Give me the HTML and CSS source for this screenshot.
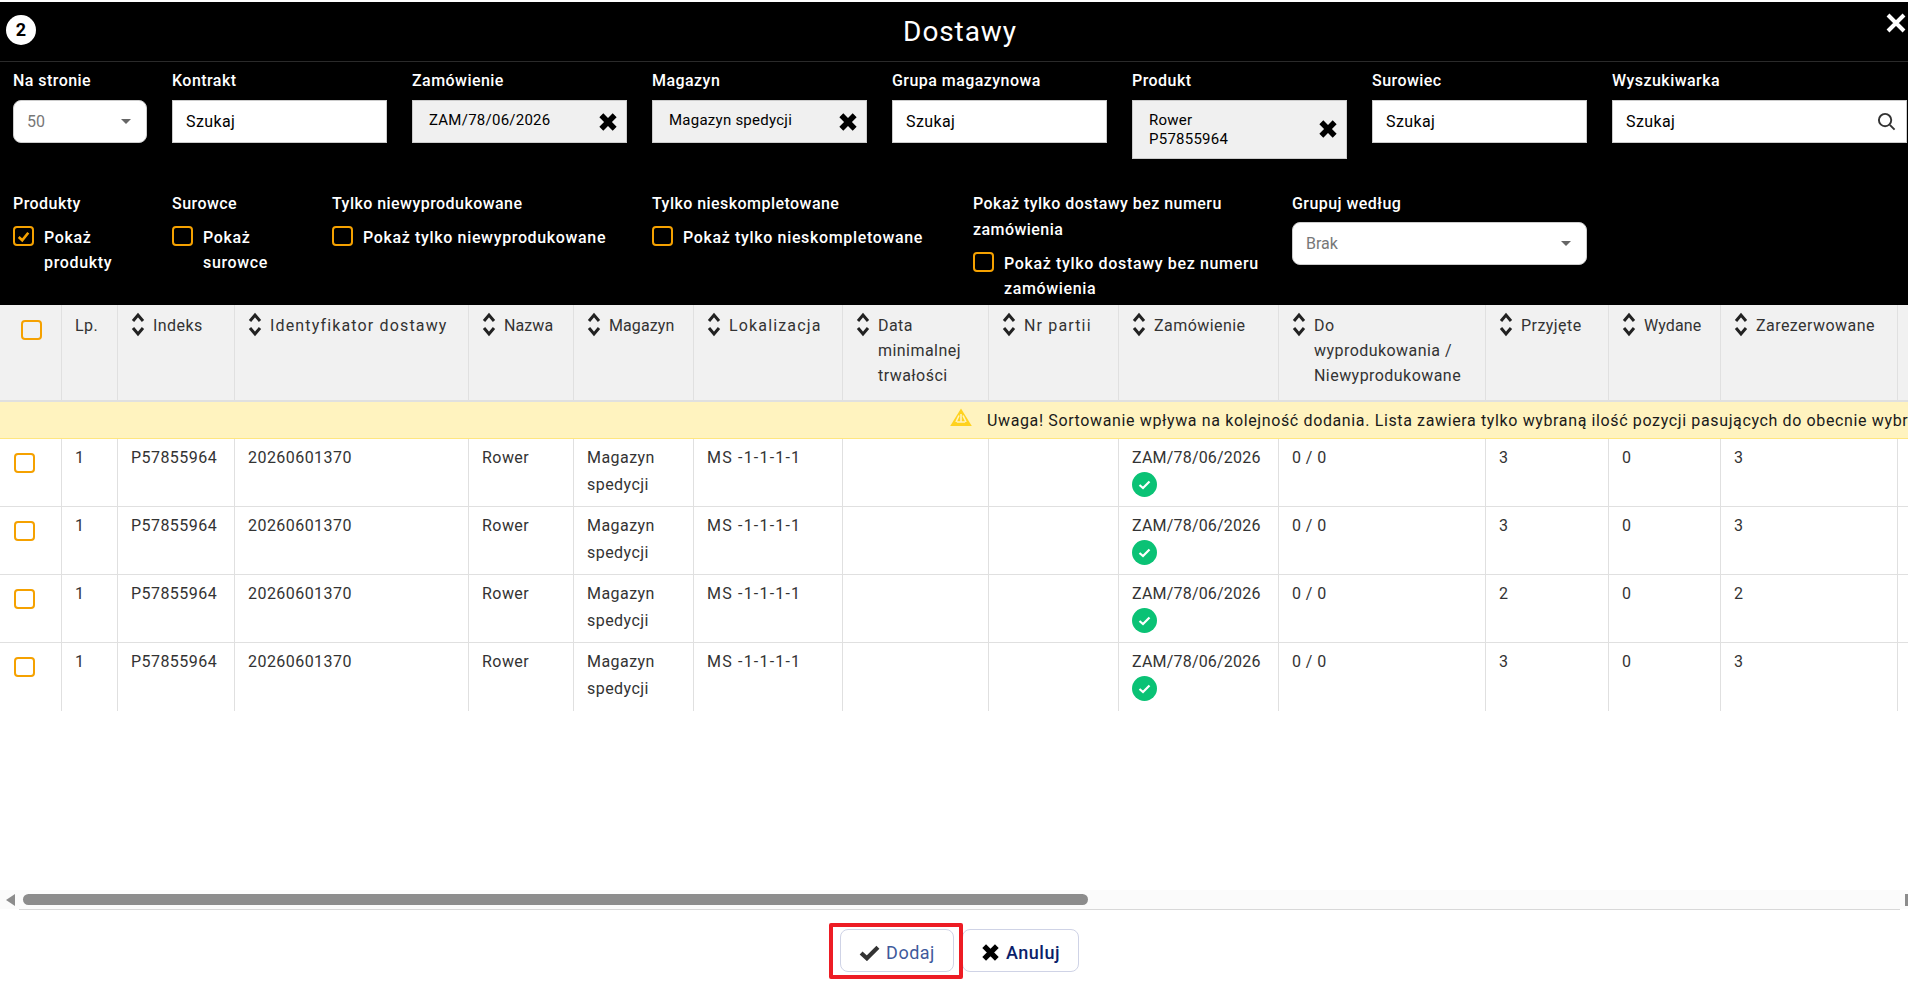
FILE: index.html
```html
<!DOCTYPE html>
<html lang="pl">
<head>
    <meta charset="UTF-8">
    <meta name="viewport" content="width=device-width, initial-scale=1.0">
    <title>Dostawy</title>
    <link rel="stylesheet" href="styles.css">
</head>
<body>
    <div class="modal">
        <header class="modal-header">
            <span class="step-badge">2</span>
            <h1>Dostawy</h1>
            <svg class="close-icon" viewBox="0 0 20 20"><path d="M2 2 L18 18 M18 2 L2 18"/></svg>
        </header>

        <section class="filters">
            <div class="filter-row top-row">
                <div class="field">
                    <label>Na stronie</label>
                    <div class="select-box"><span>50</span><i class="caret"></i></div>
                </div>
                <div class="field">
                    <label>Kontrakt</label>
                    <div class="search-box"><span>Szukaj</span></div>
                </div>
                <div class="field">
                    <label>Zamówienie</label>
                    <div class="chosen-box"><span>ZAM/78/06/2026</span><svg class="clear-icon" viewBox="0 0 18 18"><path d="M3 3 L15 15 M15 3 L3 15"/></svg></div>
                </div>
                <div class="field">
                    <label>Magazyn</label>
                    <div class="chosen-box"><span>Magazyn spedycji</span><svg class="clear-icon" viewBox="0 0 18 18"><path d="M3 3 L15 15 M15 3 L3 15"/></svg></div>
                </div>
                <div class="field">
                    <label>Grupa magazynowa</label>
                    <div class="search-box"><span>Szukaj</span></div>
                </div>
                <div class="field">
                    <label>Produkt</label>
                    <div class="chosen-box tall"><span>Rower<br>P57855964</span><svg class="clear-icon" viewBox="0 0 18 18"><path d="M3 3 L15 15 M15 3 L3 15"/></svg></div>
                </div>
                <div class="field">
                    <label>Surowiec</label>
                    <div class="search-box"><span>Szukaj</span></div>
                </div>
                <div class="field">
                    <label>Wyszukiwarka</label>
                    <div class="search-box"><span>Szukaj</span><svg class="search-icon" viewBox="0 0 20 20"><circle cx="8.5" cy="8.5" r="6.5"/><path d="M13.5 13.5 L18.5 18.5"/></svg></div>
                </div>
            </div>

            <div class="filter-row bottom-row">
                <div class="field">
                    <label>Produkty</label>
                    <div class="check-line">
                        <span class="check"><svg viewBox="0 0 16 16"><path d="M3.5 8.5 L6.8 11.5 L12.5 4.5"/></svg></span>
                        <span>Pokaż produkty</span>
                    </div>
                </div>
                <div class="field">
                    <label>Surowce</label>
                    <div class="check-line"><span class="check"></span><span>Pokaż surowce</span></div>
                </div>
                <div class="field">
                    <label>Tylko niewyprodukowane</label>
                    <div class="check-line"><span class="check"></span><span>Pokaż tylko niewyprodukowane</span></div>
                </div>
                <div class="field">
                    <label>Tylko nieskompletowane</label>
                    <div class="check-line"><span class="check"></span><span>Pokaż tylko nieskompletowane</span></div>
                </div>
                <div class="field">
                    <label>Pokaż tylko dostawy bez numeru zamówienia</label>
                    <div class="check-line"><span class="check"></span><span>Pokaż tylko dostawy bez numeru zamówienia</span></div>
                </div>
                <div class="field">
                    <label>Grupuj według</label>
                    <div class="select-box group-select"><span>Brak</span><i class="caret"></i></div>
                </div>
            </div>
        </section>

        <div class="table-wrap">
            <table class="deliveries">
                <colgroup>
                    <col class="c-check"><col class="c-lp"><col class="c-index"><col class="c-ident">
                    <col class="c-name"><col class="c-store"><col class="c-loc"><col class="c-date">
                    <col class="c-batch"><col class="c-order"><col class="c-todo"><col class="c-in">
                    <col class="c-out"><col class="c-res"><col class="c-rest">
                </colgroup>
                <thead>
                    <tr>
                        <th class="head-check"><span class="check"></span></th>
                        <th>Lp.</th>
                        <th><div class="sort"><svg viewBox="0 0 14 26"><path d="M2 10 L7 4 L12 10 M2 17 L7 23 L12 17"/></svg><span>Indeks</span></div></th>
                        <th><div class="sort wide"><svg viewBox="0 0 14 26"><path d="M2 10 L7 4 L12 10 M2 17 L7 23 L12 17"/></svg><span>Identyfikator dostawy</span></div></th>
                        <th><div class="sort narrow"><svg viewBox="0 0 14 26"><path d="M2 10 L7 4 L12 10 M2 17 L7 23 L12 17"/></svg><span>Nazwa</span></div></th>
                        <th><div class="sort narrow"><svg viewBox="0 0 14 26"><path d="M2 10 L7 4 L12 10 M2 17 L7 23 L12 17"/></svg><span>Magazyn</span></div></th>
                        <th><div class="sort wide"><svg viewBox="0 0 14 26"><path d="M2 10 L7 4 L12 10 M2 17 L7 23 L12 17"/></svg><span>Lokalizacja</span></div></th>
                        <th><div class="sort"><svg viewBox="0 0 14 26"><path d="M2 10 L7 4 L12 10 M2 17 L7 23 L12 17"/></svg><span>Data<br>minimalnej<br>trwałości</span></div></th>
                        <th><div class="sort wide"><svg viewBox="0 0 14 26"><path d="M2 10 L7 4 L12 10 M2 17 L7 23 L12 17"/></svg><span>Nr partii</span></div></th>
                        <th><div class="sort"><svg viewBox="0 0 14 26"><path d="M2 10 L7 4 L12 10 M2 17 L7 23 L12 17"/></svg><span>Zamówienie</span></div></th>
                        <th><div class="sort"><svg viewBox="0 0 14 26"><path d="M2 10 L7 4 L12 10 M2 17 L7 23 L12 17"/></svg><span>Do<br>wyprodukowania /<br>Niewyprodukowane</span></div></th>
                        <th><div class="sort"><svg viewBox="0 0 14 26"><path d="M2 10 L7 4 L12 10 M2 17 L7 23 L12 17"/></svg><span>Przyjęte</span></div></th>
                        <th><div class="sort narrow"><svg viewBox="0 0 14 26"><path d="M2 10 L7 4 L12 10 M2 17 L7 23 L12 17"/></svg><span>Wydane</span></div></th>
                        <th><div class="sort"><svg viewBox="0 0 14 26"><path d="M2 10 L7 4 L12 10 M2 17 L7 23 L12 17"/></svg><span>Zarezerwowane</span></div></th>
                        <th></th>
                    </tr>
                </thead>
                <tbody>
                    <tr class="notice-row">
                        <td colspan="15">
                            <div class="notice">
                                <svg viewBox="0 0 22 18"><path class="tri" d="M11 0.5 L21.8 18 L0.2 18 Z"/><path class="tri-mark" d="M11 6 V13.5 M7 14 L15 14 M9 7.5 L6 14 M13 7.5 L16 14"/></svg>
                                <span>Uwaga! Sortowanie wpływa na kolejność dodania. Lista zawiera tylko wybraną ilość pozycji pasujących do obecnie wybranych</span>
                            </div>
                        </td>
                    </tr>
                    <tr>
                        <td class="row-check"><span class="check"></span></td>
                        <td>1</td><td>P57855964</td><td>20260601370</td><td>Rower</td><td>Magazyn<br>spedycji</td><td class="loc">MS -1-1-1-1</td><td></td><td></td>
                        <td class="order">ZAM/78/06/2026<svg class="ok-icon" viewBox="0 0 25 25"><circle cx="12.5" cy="12.5" r="12.5"/><path d="M7.5 13 L11 16 L17.5 9.5"/></svg></td>
                        <td>0 / 0</td><td>3</td><td>0</td><td>3</td><td></td>
                    </tr>
                    <tr>
                        <td class="row-check"><span class="check"></span></td>
                        <td>1</td><td>P57855964</td><td>20260601370</td><td>Rower</td><td>Magazyn<br>spedycji</td><td class="loc">MS -1-1-1-1</td><td></td><td></td>
                        <td class="order">ZAM/78/06/2026<svg class="ok-icon" viewBox="0 0 25 25"><circle cx="12.5" cy="12.5" r="12.5"/><path d="M7.5 13 L11 16 L17.5 9.5"/></svg></td>
                        <td>0 / 0</td><td>3</td><td>0</td><td>3</td><td></td>
                    </tr>
                    <tr>
                        <td class="row-check"><span class="check"></span></td>
                        <td>1</td><td>P57855964</td><td>20260601370</td><td>Rower</td><td>Magazyn<br>spedycji</td><td class="loc">MS -1-1-1-1</td><td></td><td></td>
                        <td class="order">ZAM/78/06/2026<svg class="ok-icon" viewBox="0 0 25 25"><circle cx="12.5" cy="12.5" r="12.5"/><path d="M7.5 13 L11 16 L17.5 9.5"/></svg></td>
                        <td>0 / 0</td><td>2</td><td>0</td><td>2</td><td></td>
                    </tr>
                    <tr class="last-row">
                        <td class="row-check"><span class="check"></span></td>
                        <td>1</td><td>P57855964</td><td>20260601370</td><td>Rower</td><td>Magazyn<br>spedycji</td><td class="loc">MS -1-1-1-1</td><td></td><td></td>
                        <td class="order">ZAM/78/06/2026<svg class="ok-icon" viewBox="0 0 25 25"><circle cx="12.5" cy="12.5" r="12.5"/><path d="M7.5 13 L11 16 L17.5 9.5"/></svg></td>
                        <td>0 / 0</td><td>3</td><td>0</td><td>3</td><td></td>
                    </tr>
                </tbody>
            </table>
        </div>

        <div class="scrollbar">
            <i class="arrow-left"></i>
            <div class="thumb"></div>
            <i class="arrow-right"></i>
        </div>
        <div class="scroll-line"></div>

        <footer class="modal-footer">
            <div class="marked">
                <button class="btn btn-add">
                    <svg viewBox="0 0 20 16"><path d="M2 8.5 L7.5 13.5 L18 3"/></svg>Dodaj
                </button>
                <span class="red-box"></span>
            </div>
            <button class="btn btn-cancel">
                <svg viewBox="0 0 18 18"><path d="M3 3 L15 15 M15 3 L3 15"/></svg>Anuluj
            </button>
        </footer>
    </div>
</body>
</html>
```

FILE: styles.css
```css
* {
    box-sizing: border-box;
}
body, html {
    margin: 0;
    padding: 0;
    height: 100%;
    overflow: hidden;
    background-color: #ffffff;
    font-family: Roboto, "Liberation Sans", sans-serif;
    font-size: 16px;
}
.modal {
    display: flex;
    flex-direction: column;
    height: 100%;
    padding-top: 2px;
}
.modal-header {
    display: flex;
    align-items: center;
    justify-content: center;
    position: relative;
    height: 60px;
    flex-shrink: 0;
    padding-left: 12px;
    background-color: #000000;
    border-bottom: 1px solid #2a2a2a;
    color: #ffffff;
}
.modal-header h1 {
    margin: 0;
    font-size: 28px;
    font-weight: 400;
    letter-spacing: 0.9px;
}
.step-badge {
    position: absolute;
    left: 6px;
    top: 13px;
    width: 30px;
    height: 30px;
    border-radius: 50%;
    background-color: #ffffff;
    color: #000000;
    font-weight: 700;
    font-size: 18px;
    line-height: 30px;
    text-align: center;
}
.close-icon {
    position: absolute;
    right: 2px;
    top: 11px;
    width: 20px;
    height: 20px;
    fill: none;
    stroke: #ffffff;
    stroke-width: 4;
}
.filters {
    flex-shrink: 0;
    height: 243px;
    background-color: #000000;
    color: #ffffff;
    padding-left: 13px;
}
.filter-row {
    display: grid;
    column-gap: 25px;
}
.top-row {
    grid-template-columns: 134px repeat(6, 215px) 295px;
    height: 98px;
    padding-top: 6px;
}
.bottom-row {
    grid-template-columns: 134px 135px 295px 296px 294px 295px;
    margin-top: 31px;
}
.field label {
    display: block;
    font-weight: 500;
    line-height: 26px;
    letter-spacing: 0.45px;
}
.top-row label {
    margin-bottom: 6px;
}
.select-box, .search-box, .chosen-box {
    display: flex;
    align-items: center;
    justify-content: space-between;
    height: 43px;
    border: 1px solid #cccccc;
    color: #000000;
}
.select-box {
    background-color: #ffffff;
    border-radius: 8px;
    padding: 0 15px 0 13px;
    color: #777777;
}
.group-select {
    margin-top: 5px;
}
.search-box {
    background-color: #ffffff;
    padding: 0 10px 0 13px;
    letter-spacing: 0.4px;
}
.chosen-box {
    background-color: #f0f0f0;
    padding: 0 8px 3px 16px;
    font-size: 15px;
    line-height: 19px;
    letter-spacing: 0.25px;
}
.chosen-box.tall {
    height: 59px;
    padding-bottom: 2px;
    align-items: flex-start;
    padding-top: 10px;
}
.chosen-box.tall .clear-icon {
    margin-top: 8px;
}
.caret {
    width: 0;
    height: 0;
    border-left: 5px solid transparent;
    border-right: 5px solid transparent;
    border-top: 5px solid #666666;
}
.clear-icon {
    width: 20px;
    height: 20px;
    margin-bottom: -4px;
    fill: none;
    stroke: #000000;
    stroke-width: 5;
}
.search-icon {
    width: 19px;
    height: 19px;
    fill: none;
    stroke: #333333;
    stroke-width: 2;
}
.check-line {
    display: flex;
    gap: 10px;
    line-height: 25px;
    font-weight: 500;
    letter-spacing: 0.65px;
    margin-top: 8px;
}
.check {
    display: block;
    flex-shrink: 0;
    width: 21px;
    height: 20px;
    margin-top: 1px;
    border: 2px solid #f5a100;
    border-radius: 4px;
}
.check svg {
    display: block;
    fill: none;
    stroke: #f5a100;
    stroke-width: 2.5;
}
.table-wrap {
    flex-grow: 1;
    min-height: 0;
    overflow: hidden;
}
.deliveries {
    width: 2000px;
    table-layout: fixed;
    border-collapse: separate;
    border-spacing: 0;
    color: #333333;
}
.c-check { width: 62px; }
.c-lp { width: 56px; }
.c-index { width: 117px; }
.c-ident { width: 234px; }
.c-name { width: 105px; }
.c-store { width: 120px; }
.c-loc { width: 149px; }
.c-date { width: 146px; }
.c-batch { width: 130px; }
.c-order { width: 160px; }
.c-todo { width: 207px; }
.c-in { width: 123px; }
.c-out { width: 112px; }
.c-res { width: 177px; }
.c-rest { width: 102px; }
th, td {
    padding: 5px 13px 0;
    border-right: 1px solid #e0e0e0;
    border-bottom: 1px solid #e0e0e0;
    text-align: left;
    vertical-align: top;
    font-weight: 400;
    line-height: 27px;
    letter-spacing: 0.45px;
    white-space: nowrap;
}
th {
    height: 97px;
    padding-top: 8px;
    line-height: 25px;
    background-color: #f1f1f1;
    border-bottom-width: 2px;
}
td {
    height: 68px;
}
td.loc {
    letter-spacing: 1.2px;
}
td.order {
    letter-spacing: 0.2px;
}
.sort {
    display: flex;
    gap: 8px;
}
.sort.wide {
    letter-spacing: 1.15px;
}
.sort.narrow {
    letter-spacing: 0.1px;
}
.sort svg {
    flex-shrink: 0;
    width: 14px;
    height: 26px;
    margin-top: -2px;
    fill: none;
    stroke: #222222;
    stroke-width: 3;
}
th.head-check {
    padding: 14px 0 0 21px;
}
td.row-check {
    padding: 13px 0 0 14px;
}
.last-row td {
    border-bottom: none;
}
.notice-row td {
    height: 37px;
    padding: 0 0 0 950px;
    background-color: #fff3bf;
    border-right: none;
    border-bottom: 1px solid #ffe680;
    color: #1a1a1a;
    letter-spacing: 0.63px;
}
.notice {
    display: flex;
    align-items: center;
    gap: 15px;
    height: 36px;
    overflow: hidden;
}
.notice svg {
    flex-shrink: 0;
    width: 22px;
    height: 18px;
    margin-top: -6px;
}
.tri {
    fill: #ffd21f;
}
.tri-mark {
    fill: none;
    stroke: #fff3bf;
    stroke-width: 1.6;
}
.ok-icon {
    display: block;
    width: 25px;
    height: 25px;
    margin-top: 1px;
}
.ok-icon circle {
    fill: #0ac275;
}
.ok-icon path {
    fill: none;
    stroke: #ffffff;
    stroke-width: 2.2;
}
.scrollbar {
    display: flex;
    align-items: center;
    position: relative;
    flex-shrink: 0;
    height: 19px;
    background-color: #fbfbfb;
    padding-left: 6px;
}
.arrow-left {
    width: 0;
    height: 0;
    border-top: 6px solid transparent;
    border-bottom: 6px solid transparent;
    border-right: 9px solid #8c8c8c;
}
.arrow-right {
    position: absolute;
    right: 0;
    top: 4px;
    width: 3px;
    height: 12px;
    background-color: #8c8c8c;
}
.thumb {
    width: 1065px;
    height: 11px;
    margin-left: 8px;
    border-radius: 6px;
    background-color: #8c8c8c;
}
.scroll-line {
    flex-shrink: 0;
    height: 1px;
    margin: 0 8px 0 19px;
    background-color: #d8d8d8;
}
.modal-footer {
    display: flex;
    justify-content: center;
    align-items: flex-start;
    gap: 8px;
    flex-shrink: 0;
    height: 72px;
    padding: 19px 0 0 11px;
}
.marked {
    position: relative;
}
.btn {
    display: flex;
    align-items: center;
    justify-content: center;
    gap: 6px;
    height: 43px;
    padding: 3px 0 0;
    background-color: #ffffff;
    border: 1px solid #cfd3e6;
    border-radius: 8px;
    font-family: Roboto, "Liberation Sans", sans-serif;
    font-size: 18px;
    letter-spacing: 0.5px;
}
.btn-add {
    width: 114px;
    color: #3f5a9b;
}
.btn-add svg {
    width: 21px;
    height: 17px;
    fill: none;
    stroke: #333333;
    stroke-width: 4;
}
.btn-cancel {
    width: 117px;
    color: #0b1f6b;
    font-weight: 500;
}
.btn-cancel svg {
    width: 19px;
    height: 19px;
    fill: none;
    stroke: #000000;
    stroke-width: 5;
}
.red-box {
    position: absolute;
    left: -11px;
    right: -9px;
    top: -6px;
    bottom: -7px;
    border: 4px solid #ed1c24;
    border-radius: 2px;
    pointer-events: none;
}
```
